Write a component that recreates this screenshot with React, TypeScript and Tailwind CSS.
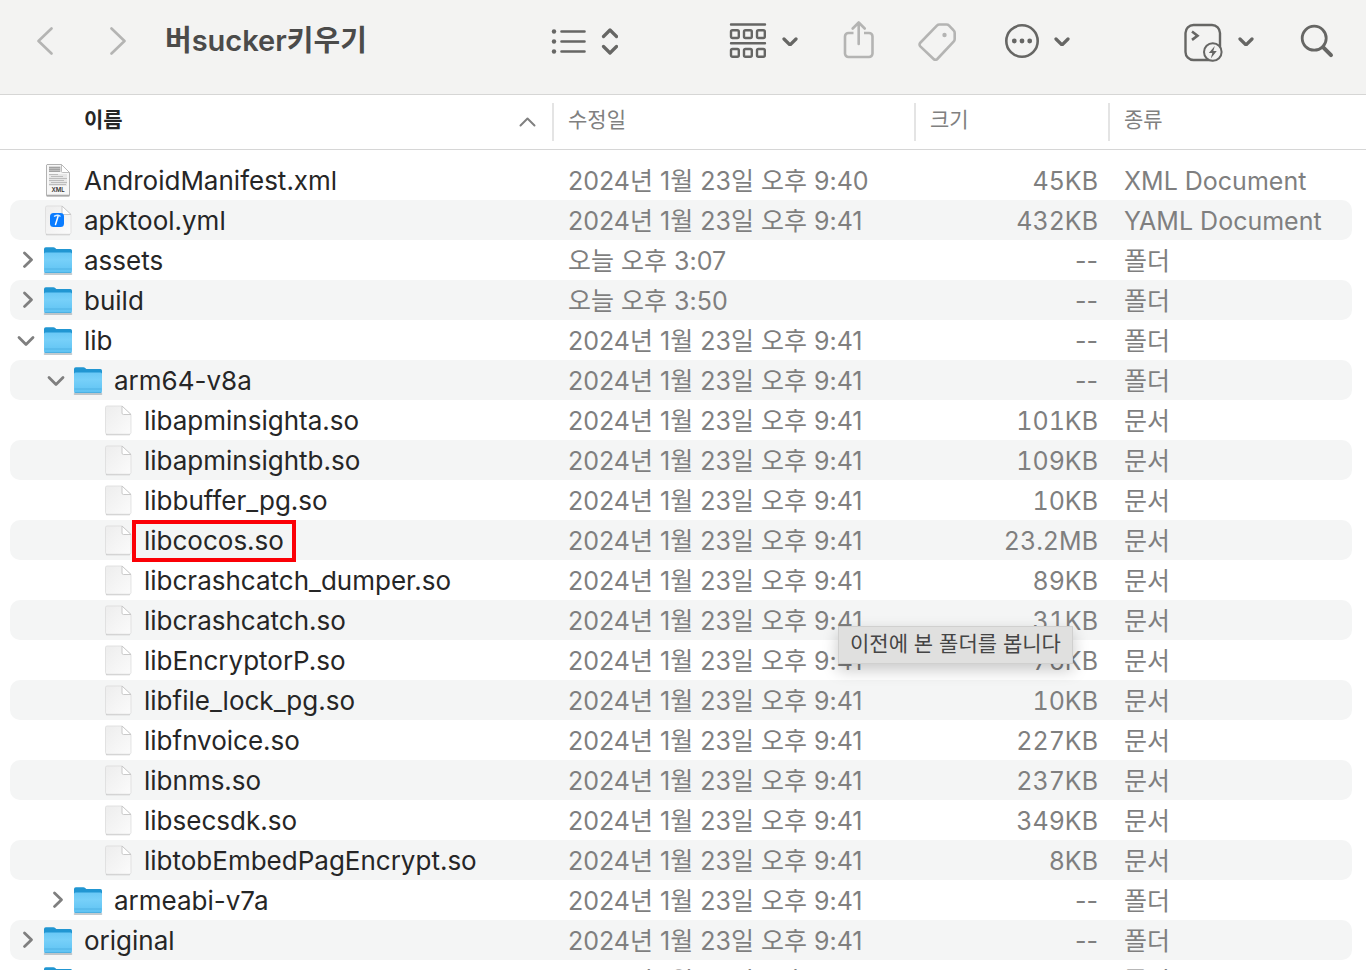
import { useState } from "react";

type Kind = "folder" | "doc" | "xml" | "yml";

interface Entry {
  name: string;
  icon: Kind;
  depth: 0 | 1 | 2;
  open?: boolean;
  date: string;
  size: string;
  type: string;
  marked?: boolean;
}

const DATE = "2024년 1월 23일 오후 9:41";

function lib(name: string, size: string, marked = false): Entry {
  return { name, icon: "doc", depth: 2, date: DATE, size, type: "문서", marked };
}

function folder(name: string, depth: 0 | 1, open = false, date = DATE): Entry {
  return { name, icon: "folder", depth, open, date, size: "--", type: "폴더" };
}

const ENTRIES: Entry[] = [
  {
    name: "AndroidManifest.xml",
    icon: "xml",
    depth: 0,
    date: "2024년 1월 23일 오후 9:40",
    size: "45KB",
    type: "XML Document",
  },
  { name: "apktool.yml", icon: "yml", depth: 0, date: DATE, size: "432KB", type: "YAML Document" },
  folder("assets", 0, false, "오늘 오후 3:07"),
  folder("build", 0, false, "오늘 오후 3:50"),
  folder("lib", 0, true),
  folder("arm64-v8a", 1, true),
  lib("libapminsighta.so", "101KB"),
  lib("libapminsightb.so", "109KB"),
  lib("libbuffer_pg.so", "10KB"),
  lib("libcocos.so", "23.2MB", true),
  lib("libcrashcatch_dumper.so", "89KB"),
  lib("libcrashcatch.so", "31KB"),
  lib("libEncryptorP.so", "76KB"),
  lib("libfile_lock_pg.so", "10KB"),
  lib("libfnvoice.so", "227KB"),
  lib("libnms.so", "237KB"),
  lib("libsecsdk.so", "349KB"),
  lib("libtobEmbedPagEncrypt.so", "8KB"),
  folder("armeabi-v7a", 1),
  folder("original", 0),
  folder("res", 0),
];

const INDENT = ["pl-[6px]", "pl-[36px]", "pl-[66px]"];

function SmallChevron() {
  return (
    <svg width="16" height="10" viewBox="0 0 16 10" fill="none" stroke="currentColor" strokeWidth="3.2" strokeLinecap="round" strokeLinejoin="round">
      <path d="M2 3l6 6 6-6" />
    </svg>
  );
}

function FolderIcon() {
  return (
    <svg width="32" height="32" viewBox="0 0 32 32" fill="none">
      <defs>
        <linearGradient id="folderFront" x1="0" y1="0" x2="0" y2="1">
          <stop offset="0" stopColor="#6ac8f6" />
          <stop offset="0.35" stopColor="#77d0f9" />
          <stop offset="1" stopColor="#5ec2f2" />
        </linearGradient>
      </defs>
      <path d="M2.500 30h27" stroke="#7c8c95" strokeOpacity="0.6" strokeWidth="1.500" strokeLinecap="round" />
      <path d="M2 5a1.800 1.800 0 0 1 1.800-1.800h7.400c1 0 1.600.4 2.300 1l.8.7h14.100A1.700 1.700 0 0 1 30 6.700v6H2z" fill="#2196d2" />
      <path d="M2 10a1.500 1.500 0 0 1 1.500-1.500h25A1.500 1.500 0 0 1 30 10v17.300a1.700 1.700 0 0 1-1.700 1.700H3.700A1.700 1.700 0 0 1 2 27.300z" fill="url(#folderFront)" />
      <path d="M2.500 25h27" stroke="#45a9dc" strokeWidth="0.7" />
      <path d="M2.500 28.500h27" stroke="#45a9dc" strokeWidth="0.7" />
    </svg>
  );
}

function PageShape() {
  return (
    <>
      <defs>
        <linearGradient id="pageFill" x1="0" y1="0" x2="1" y2="1">
          <stop offset="0" stopColor="#ededed" />
          <stop offset="1" stopColor="#fbfbfb" />
        </linearGradient>
      </defs>
      <path d="M4.500 30.600h23" stroke="#b9b9b9" strokeOpacity="0.8" strokeWidth="1.200" strokeLinecap="round" />
      <path d="M5 2h15l9 8.500V28.500a1.700 1.700 0 0 1-1.700 1.700H5.200a1.700 1.700 0 0 1-1.700-1.700V3.700A1.600 1.600 0 0 1 5 2z" fill="url(#pageFill)" stroke="#d9d9d9" strokeWidth="0.700" />
      <path d="M20 2l9 8.500h-7.500A1.500 1.500 0 0 1 20 9z" fill="#fff" stroke="#c4c4c4" strokeWidth="0.900" strokeLinejoin="round" />
    </>
  );
}

function FileIcon({ kind }: { kind: Kind }) {
  if (kind === "folder") return <FolderIcon />;

  if (kind === "xml") {
    return (
      <svg width="32" height="34" viewBox="0 0 32 34" fill="none">
        <path d="M5 32.700h22" stroke="#8e8e8e" strokeWidth="1.400" strokeLinecap="round" />
        <path d="M5 1.500h14.500L27.500 9.500v22.700h-23V2z" fill="#f7f7f7" stroke="#a9a9a9" strokeWidth="0.900" />
        <path d="M7 3.500h11.500V9H7z" fill="#bdbdbd" />
        <path d="M7 4.500h11M7 6.500h11M7 8.500h11" stroke="#9a9a9a" strokeWidth="0.800" />
        <path d="M7 11.500h9M9 13.500h12M7 15.500h18M7 17.500h15M9 19.500h16M7 21.500h17" stroke="#b5b5b5" strokeWidth="1" />
        <path d="M7 11h18v12H7z" fill="#c9c9c9" fillOpacity="0.350" />
        <path d="M19.500 1.500l8 8h-7a1 1 0 0 1-1-1z" fill="#fff" stroke="#b5b5b5" strokeWidth="0.900" />
        <text x="16" y="29" textAnchor="middle" fontSize="6" fontWeight="600" fill="#333">XML</text>
      </svg>
    );
  }

  return (
    <svg width="32" height="32" viewBox="0 0 32 32" fill="none">
      <PageShape />
      {kind === "yml" && (
        <>
          <rect x="8" y="9" width="14" height="14" rx="3.500" fill="#0a7cff" />
          <path d="M12.500 12.200c2-1.200 4-1.200 5.500-.2" stroke="#d8ecff" strokeWidth="1.500" strokeLinecap="round" />
          <path d="M16 12.500l-2.500 8" stroke="#fff" strokeWidth="1.500" strokeLinecap="round" />
        </>
      )}
    </svg>
  );
}

function Toolbar() {
  return (
    <header className="flex h-[95px] items-center border-b border-[#d6d6d5] bg-[#f3f3f2] pr-8 pb-3 text-[#666664]">
      <div className="flex min-w-0 flex-1 items-center pl-9">
        <button type="button" aria-label="뒤로" className="text-[#b4b4b3]">
          <svg width="18" height="28" viewBox="0 0 18 28" fill="none" stroke="currentColor" strokeWidth="2.600" strokeLinecap="round" strokeLinejoin="round">
            <path d="M15.500 1.500L2.500 14l13 12.500" />
          </svg>
        </button>
        <button type="button" aria-label="앞으로" className="ml-[55px] text-[#b4b4b3]">
          <svg width="18" height="28" viewBox="0 0 18 28" fill="none" stroke="currentColor" strokeWidth="2.600" strokeLinecap="round" strokeLinejoin="round">
            <path d="M2.500 1.500l13 12.500-13 12.500" />
          </svg>
        </button>
        <h1 className="ml-[38px] truncate text-[29px] leading-[42px] font-semibold text-[#4b4b4a]">버sucker키우기</h1>
      </div>

      <button type="button" aria-label="목록 보기" className="flex items-center gap-[14px]">
        <svg width="36" height="28" viewBox="0 0 36 28" fill="none" stroke="currentColor" strokeWidth="2.600" strokeLinecap="round">
          <g fill="currentColor" stroke="none">
            <circle cx="3" cy="4.500" r="2.200" />
            <circle cx="3" cy="14.500" r="2.200" />
            <circle cx="3" cy="24.500" r="2.200" />
          </g>
          <path d="M10.500 4.500h23M10.500 14.500h23M10.500 24.500h23" />
        </svg>
        <svg width="17" height="28" viewBox="0 0 17 28" fill="none" stroke="currentColor" strokeWidth="3.200" strokeLinecap="round" strokeLinejoin="round">
          <path d="M2.500 9.500L9 3l6.500 6.500M2.500 19.500L9 26l6.500-6.500" />
        </svg>
      </button>

      <button type="button" aria-label="그룹" className="ml-[111px] flex items-center gap-[15px]">
        <svg width="38" height="36" viewBox="0 0 38 36" fill="none" stroke="currentColor" strokeWidth="2.400" strokeLinecap="round">
          <path d="M2 1.500h34M2 20.300h34" />
          <rect x="2" y="7.200" width="7.800" height="7.800" rx="1.500" />
          <rect x="15" y="7.200" width="7.800" height="7.800" rx="1.500" />
          <rect x="28" y="7.200" width="7.800" height="7.800" rx="1.500" />
          <rect x="2" y="26" width="7.800" height="7.800" rx="1.500" />
          <rect x="15" y="26" width="7.800" height="7.800" rx="1.500" />
          <rect x="28" y="26" width="7.800" height="7.800" rx="1.500" />
        </svg>
        <SmallChevron />
      </button>

      <button type="button" aria-label="공유" className="ml-[44px] text-[#b4b4b3]">
        <svg width="32" height="40" viewBox="0 0 32 40" fill="none" stroke="currentColor" strokeWidth="2.600" strokeLinecap="round" strokeLinejoin="round">
          <path d="M11.500 12H6.500a3.500 3.500 0 0 0-3.500 3.500V32.500A3.500 3.500 0 0 0 6.500 36h20.500a3.500 3.500 0 0 0 3.500-3.500V15.500a3.500 3.500 0 0 0-3.500-3.500h-5" strokeLinecap="butt" />
          <path d="M16.700 23V2M10.700 7.500l6-6 6 6" />
        </svg>
      </button>

      <button type="button" aria-label="태그" className="ml-[43px] text-[#b4b4b3]">
        <svg width="40" height="40" viewBox="0 0 40 40" fill="none" stroke="currentColor" strokeWidth="2.600" strokeLinejoin="round">
          <path d="M22.500 3.500h7c1 0 1.900.4 2.600 1.100l4.500 4.800c.7.7 1.100 1.600 1.100 2.600v6c0 1-.4 1.900-1.100 2.600L20.300 38a2.600 2.600 0 0 1-3.700 0L3.300 25.400a2.600 2.600 0 0 1 0-3.700L19.900 4.600c.7-.7 1.600-1.100 2.600-1.100z" />
          <circle cx="27.500" cy="14" r="2.200" fill="currentColor" stroke="none" />
        </svg>
      </button>

      <button type="button" aria-label="동작" className="ml-[47px] flex items-center gap-[14px]">
        <svg width="36" height="36" viewBox="0 0 36 36" fill="none" stroke="currentColor" strokeWidth="2.600">
          <circle cx="18" cy="18" r="15.700" />
          <g fill="currentColor" stroke="none">
            <circle cx="10.300" cy="18" r="2.400" />
            <circle cx="18" cy="18" r="2.400" />
            <circle cx="25.700" cy="18" r="2.400" />
          </g>
        </svg>
        <SmallChevron />
      </button>

      <button type="button" aria-label="터미널에서 열기" className="ml-[113px] flex items-center gap-[15px]">
        <svg width="40" height="42" viewBox="0 0 40 42" fill="none" stroke="currentColor" strokeWidth="2.400" strokeLinejoin="round">
          <rect x="2.500" y="5" width="34.500" height="35" rx="8" />
          <path d="M9 11.500l5.500 4.200L9 19.900" strokeWidth="2.600" strokeLinejoin="miter" />
          <circle cx="29.800" cy="32" r="8.800" fill="#f3f3f2" strokeWidth="2" />
          <path d="M31.800 26l-6 7h3.500l-1.500 5.500 6-7.500h-3.500z" fill="currentColor" stroke="none" />
        </svg>
        <SmallChevron />
      </button>

      <button type="button" aria-label="검색" className="ml-[46px]">
        <svg width="34" height="36" viewBox="0 0 34 36" fill="none" stroke="currentColor" strokeWidth="2.800" strokeLinecap="round">
          <circle cx="14.200" cy="15.200" r="12" />
          <path d="M23 24.200l8 8" strokeWidth="4" />
        </svg>
      </button>
    </header>
  );
}

function Row({ entry, striped }: { entry: Entry; striped: boolean }) {
  const [open, setOpen] = useState(!!entry.open);
  const bg = striped ? "bg-[#f4f5f5]" : "bg-white";
  const digits = entry.icon === "folder" ? "" : "tabular-nums";

  return (
    <tr className="text-[#7f7f7f]">
      <td className="pl-[10px]">
        <div className={`flex h-10 items-center rounded-l-[10px] ${INDENT[entry.depth]} ${bg}`}>
          {entry.icon === "folder" ? (
            <button type="button" aria-label={entry.name} aria-expanded={open} onClick={() => setOpen(!open)} className="w-5 text-[#7f7f7f]">
              <svg width="20" height="20" viewBox="0 0 20 20" fill="none" stroke="currentColor" strokeWidth="2.800" strokeLinecap="round" strokeLinejoin="round">
                <path d={open ? "M3 7.500l7 7 7-7" : "M8.500 3l7 6.700-7 6.700"} />
              </svg>
            </button>
          ) : (
            <span className="w-5" />
          )}
          <span className="ml-[6px] shrink-0">
            <FileIcon kind={entry.icon} />
          </span>
          <span className="relative ml-[10px] self-start text-[26px] whitespace-nowrap text-[#262626]">
            {entry.name}
            {entry.marked && <span className="absolute -inset-x-3 inset-y-0 border-4 border-[#fb0006]" />}
          </span>
        </div>
      </td>
      <td>
        <div className={`h-10 truncate pl-4 ${bg}`}>{entry.date}</div>
      </td>
      <td>
        <div className={`h-10 truncate pr-[10px] text-right ${digits} ${bg}`}>{entry.size}</div>
      </td>
      <td className="pr-[14px]">
        <div className={`h-10 truncate rounded-r-[10px] pl-4 ${bg}`}>{entry.type}</div>
      </td>
    </tr>
  );
}

export default function App() {
  return (
    <div className="relative flex h-screen flex-col overflow-hidden bg-white font-['Inter','Noto_Sans_CJK_KR',sans-serif]">
      <Toolbar />
      <main className="min-h-0 flex-1 overflow-hidden">
        <table className="w-full table-fixed border-separate border-spacing-0">
          <colgroup>
            <col />
            <col className="w-[362px]" />
            <col className="w-[194px]" />
            <col className="w-[258px]" />
          </colgroup>
          <thead className="text-left text-[21px] leading-[34px] text-[#808080]">
            <tr>
              <th scope="col" aria-sort="ascending" className="h-[55px] border-b border-[#d6d6d6] pr-4 pl-[84px] font-semibold text-[#262626]">
                <div className="flex h-[38px] justify-between">
                  이름
                  <svg className="self-center" width="18" height="12" viewBox="0 0 18 12" fill="none" stroke="#808080" strokeWidth="2" strokeLinecap="round" strokeLinejoin="round">
                    <path d="M2.500 9.500l7-7 7 7" />
                  </svg>
                </div>
              </th>
              {["수정일", "크기", "종류"].map((label) => (
                <th key={label} scope="col" className="border-b border-[#d6d6d6] font-normal">
                  <div className="h-[38px] border-l-2 border-[#e4e4e4] pl-[14px]">{label}</div>
                </th>
              ))}
            </tr>
          </thead>
          <tbody className="text-[25px] leading-[42px] before:block before:h-[10px] before:content-['']">
            {ENTRIES.map((entry, i) => (
              <Row key={entry.name} entry={entry} striped={i % 2 === 1} />
            ))}
          </tbody>
        </table>
      </main>
      <div
        role="tooltip"
        className="absolute top-[626px] left-[838px] h-[38px] border border-[#d0d0cf] bg-[#e0e0df] px-[11px] text-[21px] leading-[34px] whitespace-nowrap text-[#454545] shadow-[0_6px_16px_rgba(0,0,0,0.22)]"
      >
        이전에 본 폴더를 봅니다
      </div>
    </div>
  );
}
